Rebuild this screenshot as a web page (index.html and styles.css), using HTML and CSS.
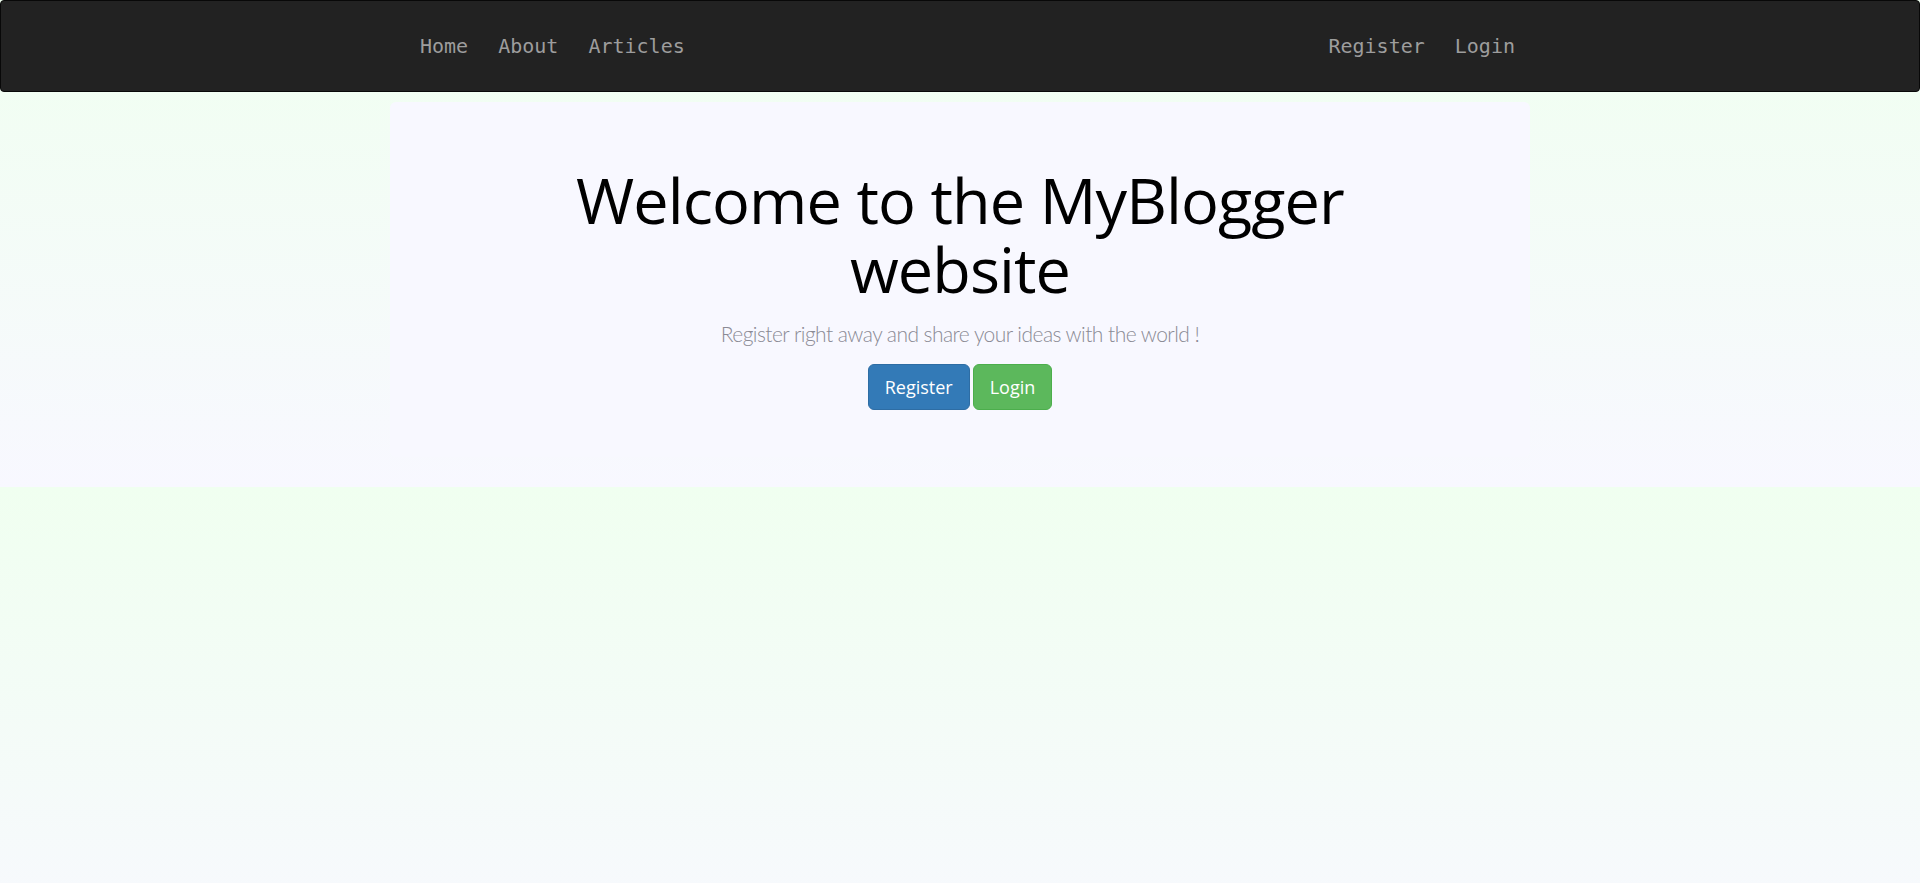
FILE: index.html
```html
<!DOCTYPE html>
<html lang="en">
<head>
<meta charset="utf-8">
<title>MyBlogger</title>
<link rel="stylesheet" href="styles.css">
</head>
<body>
<nav class="navbar">
  <div class="nav-inner">
    <ul class="nav-list">
      <li><a href="#" class="nav-link">Home</a></li>
      <li><a href="#" class="nav-link">About</a></li>
      <li><a href="#" class="nav-link">Articles</a></li>
    </ul>
    <ul class="nav-list">
      <li><a href="#" class="nav-link">Register</a></li>
      <li><a href="#" class="nav-link">Login</a></li>
    </ul>
  </div>
</nav>
<main class="page">
  <section class="jumbotron">
    <h1 class="title">Welcome to the MyBlogger website</h1>
    <p class="lead">Register right away and share your ideas with the world !</p>
    <div class="actions">
      <a href="#" class="btn btn-primary">Register</a>
      <a href="#" class="btn btn-success">Login</a>
    </div>
  </section>
</main>
</body>
</html>
```

FILE: styles.css
```css
html {
  background: linear-gradient(#f0fff0, #f8f8ff);
}

body {
  margin: 0;
  font-family: "Open Sans", "Noto Sans", sans-serif;
  color: #333;
}

.navbar {
  background: #222;
  border: 1px solid #080808;
  border-radius: 4px;
  margin-bottom: 10px;
}

.nav-inner {
  width: 1125px;
  margin: 0 auto;
  padding-left: 15px;
  height: 90px;
  display: flex;
  justify-content: space-between;
  align-items: center;
}

.nav-list {
  list-style: none;
  margin: 0;
  padding: 0;
  display: flex;
}

.nav-link {
  display: block;
  padding: 0 15px;
  font-family: "DejaVu Sans Mono", monospace;
  font-size: 20px;
  line-height: 24px;
  color: #9d9d9d;
  text-decoration: none;
}

.page {
  width: 1140px;
  margin: 0 auto;
  padding-bottom: 30px;
}

.jumbotron {
  background: #f8f8ff;
  border-radius: 6px;
  padding: 48px 60px;
  height: 259px;
  text-align: center;
}

.title {
  max-width: 900px;
  margin: 15px auto 15px;
  font-size: 63px;
  line-height: 1.1;
  font-weight: 400;
  letter-spacing: -0.9px;
  color: #000;
}

.lead {
  margin: 0 0 15px;
  font-family: Lato, sans-serif;
  font-weight: 300;
  font-size: 21px;
  line-height: 30px;
  letter-spacing: -0.55px;
  color: #8a8a94;
}

.actions {
  display: flex;
  justify-content: center;
  gap: 3px;
}

.btn {
  display: block;
  padding: 10px 16px;
  font-size: 18px;
  line-height: 24px;
  border: 1px solid transparent;
  border-radius: 6px;
  color: #fff;
  text-decoration: none;
}

.btn-primary {
  background: #337ab7;
  border-color: #2e6da4;
}

.btn-success {
  background: #5cb85c;
  border-color: #4cae4c;
}
```
